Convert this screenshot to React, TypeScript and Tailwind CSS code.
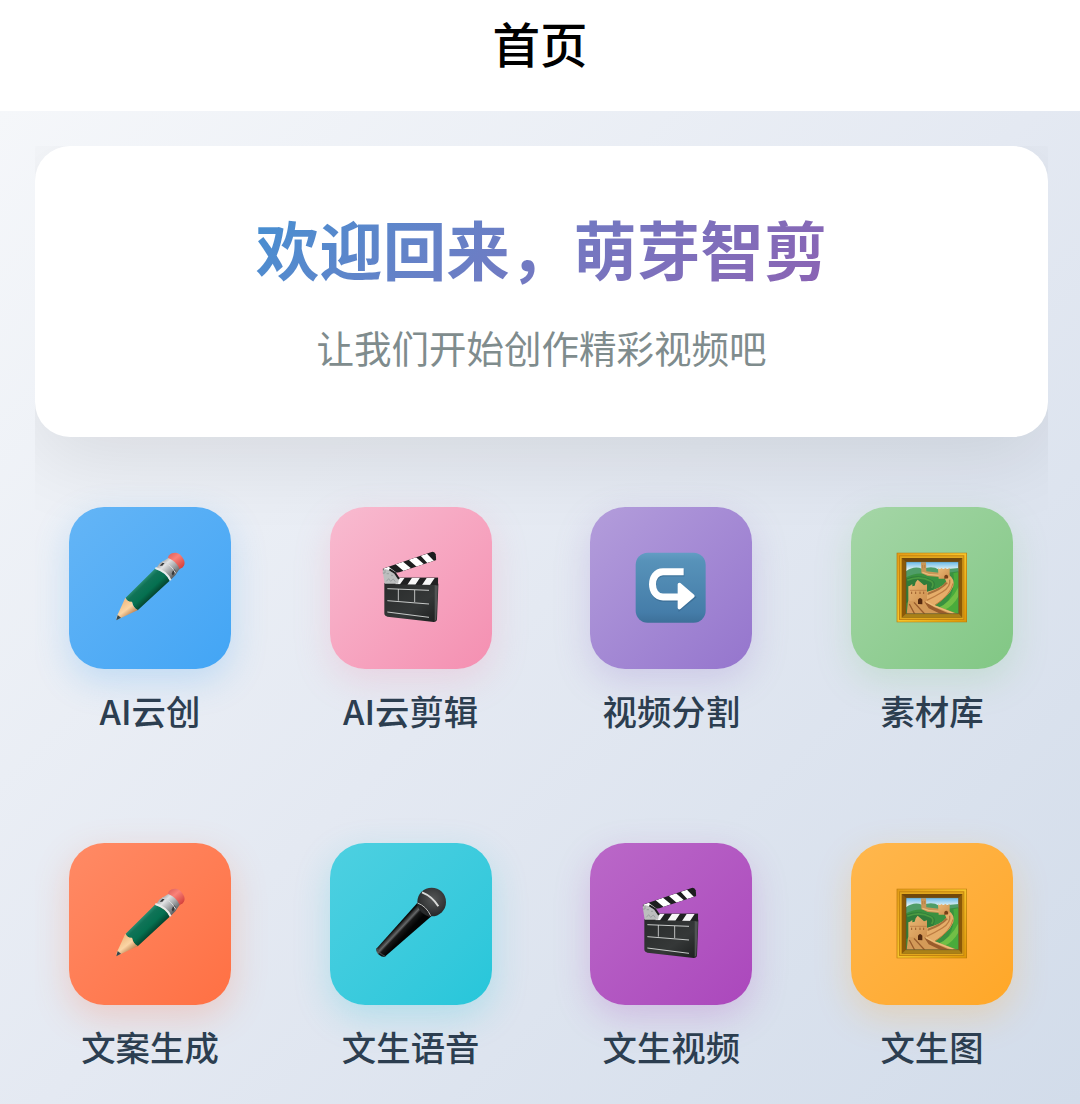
import React from "react";

const PencilIcon = () => (
  <svg viewBox="0 0 300 300" className="mt-1 h-[100px] w-[100px]">
    <defs>
      <linearGradient id="pencilBody" gradientUnits="userSpaceOnUse" x1="122" y1="124" x2="162" y2="166">
        <stop offset="0" stopColor="#2f9277" />
        <stop offset="0.25" stopColor="#107357" />
        <stop offset="0.65" stopColor="#057050" />
        <stop offset="1" stopColor="#05452f" />
      </linearGradient>
      <linearGradient id="pencilMetal" gradientUnits="userSpaceOnUse" x1="180" y1="62" x2="225" y2="110">
        <stop offset="0" stopColor="#8d9091" />
        <stop offset="0.3" stopColor="#e2e3e4" />
        <stop offset="0.6" stopColor="#a9abad" />
        <stop offset="1" stopColor="#57595b" />
      </linearGradient>
      <linearGradient id="pencilEraser" gradientUnits="userSpaceOnUse" x1="210" y1="40" x2="245" y2="82">
        <stop offset="0" stopColor="#e0635d" />
        <stop offset="0.4" stopColor="#fa8279" />
        <stop offset="1" stopColor="#d6443f" />
      </linearGradient>
      <linearGradient id="pencilWood" gradientUnits="userSpaceOnUse" x1="66" y1="190" x2="94" y2="226">
        <stop offset="0" stopColor="#f2bf87" />
        <stop offset="0.5" stopColor="#fbd5a5" />
        <stop offset="1" stopColor="#bc8050" />
      </linearGradient>
    </defs>
    <path d="M206 47Q213 37 228 38Q243 41 252 60Q257 73 248 82L236 89L203 56Z" fill="url(#pencilEraser)" />
    <path d="M169 84L179 70L205 54Q229 64 239 86L226 106L211 121Q198 94 169 84Z" fill="url(#pencilMetal)" />
    <path d="M179 77L190 66L194 69L187 77ZM215 101L221 86L227 92L219 107Z" fill="#37393b" />
    <path d="M187 66Q213 72 227 100" fill="none" stroke="#d9dadb" strokeWidth="3" />
    <path d="M77 173L165 86Q197 95 209 122L113 211Q101 205 96 186Q84 189 77 173Z" fill="url(#pencilBody)" />
    <path d="M166 84Q199 94 212 121" fill="none" stroke="#e8ecea" strokeWidth="6" />
    <path d="M76 173Q82 186 96 185Q99 203 114 210L50 240L50 230Z" fill="url(#pencilWood)" />
    <path d="M53 225L63 233L49 241Z" fill="#34474f" />
  </svg>
);

const ClapperIcon = () => (
  <svg viewBox="5 2 300 300" className="mt-1 h-[100px] w-[100px]">
    <defs>
      <linearGradient id="slate" x1="0" y1="0" x2="1" y2="1">
        <stop offset="0" stopColor="#292b2b" />
        <stop offset="0.6" stopColor="#353838" />
        <stop offset="1" stopColor="#1c1e1e" />
      </linearGradient>
      <clipPath id="clapTop">
        <path d="M70 88L219 37Q226 36 229 45L231 62L120 99L104 101L72 104Z" />
      </clipPath>
      <clipPath id="clapBottom">
        <path d="M76 114L237 114L236 137L76 135Z" />
      </clipPath>
    </defs>
    <g clipPath="url(#clapTop)">
      <path d="M60 30H240V110H60Z" fill="#1d1e1f" />
      <path d="M70 88L88 82L112 100L96 108ZM109 75L131 67L155 87L133 95ZM148 61L170 54L194 75L172 82ZM184 49L203 43L224 65L204 71Z" fill="#fff" />
    </g>
    <path d="M75 131H236Q238 134 237 142L233 240Q232 248 223 248L84 232Q75 230 75 222Z" fill="url(#slate)" />
    <path d="M226 137L235 140L231 241L226 245Z" fill="#515454" />
    <g clipPath="url(#clapBottom)">
      <path d="M76 114H238V138H76Z" fill="#202122" />
      <path d="M116 115L136 115L122 135L108 135ZM158 115L182 115L168 136L144 136ZM202 116L226 116L212 137L188 137Z" fill="#f7f7f7" />
    </g>
    <path d="M70 94Q76 88 86 91L103 101L119 119L116 133L76 133Z" fill="#bcbebe" />
    <path d="M90 90L107 101L119 119" fill="none" stroke="#1d1e1f" strokeWidth="6" />
    <path d="M70 101H77V91M82 103H89M95 108H101M81 126L88 118L94 126L102 119L108 127" fill="none" stroke="#8d9192" strokeWidth="2" />
    <path d="M84 148L209 153M84 184L209 194M84 218L209 234" fill="none" stroke="#dfe1e0" strokeWidth="2.6" />
    <path d="M117 149V184M166 152V188" fill="none" stroke="#dfe1e0" strokeWidth="2.4" />
  </svg>
);

const ArrowIcon = () => (
  <svg viewBox="0 0 300 300" className="mt-1 h-[100px] w-[100px]">
    <defs>
      <linearGradient id="arrowTile" x1="0" y1="0" x2="0" y2="1">
        <stop offset="0" stopColor="#639dc4" />
        <stop offset="0.12" stopColor="#5792b9" />
        <stop offset="0.85" stopColor="#457da9" />
        <stop offset="1" stopColor="#3d7099" />
      </linearGradient>
    </defs>
    <rect x="44" y="38" width="210" height="210" rx="36" fill="url(#arrowTile)" />
    <g transform="translate(2 4)" opacity="0.35">
      <path d="M188 95H126C83 95 83 171 126 171H178" fill="none" stroke="#244f73" strokeWidth="21" />
      <path d="M173 129L221 168L173 207Z" fill="#244f73" stroke="#244f73" strokeWidth="5" />
    </g>
    <path d="M188 95H126C84 95 84 171 126 171H178" fill="none" stroke="#fff" strokeWidth="21" />
    <path d="M175 133L216 168L175 203Z" fill="#fff" stroke="#fff" strokeWidth="10" strokeLinejoin="round" />
  </svg>
);

const PictureIcon = () => (
  <svg viewBox="0 0 300 300" className="mt-1 h-[100px] w-[100px]">
    <defs>
      <linearGradient id="pictureGold" x1="0" y1="0" x2="1" y2="1">
        <stop offset="0" stopColor="#e29b16" />
        <stop offset="0.5" stopColor="#f6c42a" />
        <stop offset="1" stopColor="#dd9707" />
      </linearGradient>
      <linearGradient id="pictureSky" x1="0" y1="0" x2="0" y2="1">
        <stop offset="0" stopColor="#64b7e8" />
        <stop offset="0.15" stopColor="#e2f2f3" />
      </linearGradient>
      <linearGradient id="wallStone" x1="0" y1="0" x2="1" y2="1">
        <stop offset="0" stopColor="#eab774" />
        <stop offset="1" stopColor="#cd8f4e" />
      </linearGradient>
      <clipPath id="pictureView">
        <path d="M72 65H230V221H72Z" />
      </clipPath>
    </defs>
    <path d="M44 38H255V247H44Z" fill="#b7770b" />
    <path d="M46 40H253V245H46Z" fill="url(#pictureGold)" />
    <path d="M51 46H247V240H51Z" fill="#c48411" />
    <path d="M54 49H244V237H54Z" fill="#e2a71d" />
    <path d="M59 54H241V233H59Z" fill="#8b5908" />
    <path d="M59 54H241L230 65H72Z" fill="#70470b" />
    <path d="M59 233L72 221H230L241 233Z" fill="#a98118" />
    <g clipPath="url(#pictureView)">
      <path d="M72 65H230V221H72Z" fill="url(#pictureSky)" />
      <path d="M72 94Q97 76 121 87Q151 76 171 89L230 84V221H72Z" fill="#4f9d68" />
      <path d="M72 112Q110 92 143 106L230 94V221H72Z" fill="#3a9140" />
      <path d="M72 116Q112 100 151 121Q166 130 152 152L72 190Z" fill="#2f7c3a" />
      <path d="M76 121Q111 105 146 123Q158 130 149 144" fill="none" stroke="#4b9a41" strokeWidth="5" />
      <path d="M214 100L230 96V221H164Q226 170 214 100Z" fill="#49ab3b" />
      <path d="M166 205Q207 186 230 140V168Q211 202 184 211Z" fill="#72bf46" />
      <path d="M117 67H132L133 94L171 98V111L137 108L118 99Z" fill="#c99657" />
      <path d="M121 97L139 103L171 106" fill="none" stroke="#e8bd7c" strokeWidth="4" />
      <path d="M122 75V85M128 75V84" fill="none" stroke="#a36e36" strokeWidth="1.5" />
      <path d="M201 105Q219 117 214 139Q201 171 148 202L120 190L133 156Q179 144 193 126L188 114Z" fill="#e5ad69" />
      <path d="M190 126Q183 142 137 158V165Q178 151 198 129Z" fill="#a8713b" />
      <path d="M203 119Q207 140 181 156Q157 171 134 181" fill="none" stroke="#bd7d42" strokeWidth="4" />
      <path d="M213 130Q207 164 157 197" fill="none" stroke="#bf7f3f" strokeWidth="3" />
      <path d="M168 85L174 88L178 84L184 88L190 84L196 88L203 84V110L197 116H170Z" fill="url(#wallStone)" />
      <path d="M187 116V108Q193 100 198 108V115" fill="#764019" />
      <path d="M84 137L91 132V139L98 137L101 127L107 119L114 125L121 131L126 136L135 133V181L115 193L79 194V139Z" fill="url(#wallStone)" />
      <path d="M84 151H134" fill="none" stroke="#b27541" strokeWidth="2" />
      <path d="M89 155V162M101 155V162M114 155V162M125 155V162" fill="none" stroke="#9a5d2d" strokeWidth="3" />
      <path d="M78 184L126 181L157 195L228 222H74Z" fill="#d39a58" />
      <path d="M82 192L98 222M96 187L128 222" fill="none" stroke="#995c2c" strokeWidth="4" />
      <path d="M126 184L157 202L204 222H176L140 205Z" fill="#995c2c" />
      <path d="M132 185L160 199L214 220" fill="none" stroke="#edbd7c" strokeWidth="4" />
      <path d="M108 192V179Q114 169 121 179V193Z" fill="#54290f" />
    </g>
    <path d="M72 65H230V221H72Z" fill="none" stroke="#68521f" strokeWidth="2" />
  </svg>
);

const MicIcon = () => (
  <svg viewBox="3 3 300 300" className="mt-1 h-[100px] w-[100px]">
    <defs>
      <linearGradient id="micHandle" gradientUnits="userSpaceOnUse" x1="104" y1="143" x2="139" y2="176">
        <stop offset="0" stopColor="#242627" />
        <stop offset="0.25" stopColor="#070808" />
        <stop offset="0.52" stopColor="#666869" />
        <stop offset="0.66" stopColor="#171818" />
        <stop offset="1" stopColor="#030404" />
      </linearGradient>
      <radialGradient id="micHead" cx="0.55" cy="0.4" r="0.6">
        <stop offset="0" stopColor="#555757" />
        <stop offset="0.7" stopColor="#353738" />
        <stop offset="1" stopColor="#242627" />
      </radialGradient>
    </defs>
    <path d="M171 85L214 124L77 243Q70 249 59 241Q47 232 49 221Z" fill="url(#micHandle)" />
    <path d="M50 219Q56 235 76 244" fill="none" stroke="#4b4d4e" strokeWidth="3" />
    <circle cx="215" cy="81" r="43" fill="url(#micHead)" />
    <path d="M169 87L177 83Q198 93 212 119L207 127Q190 99 169 87Z" fill="#242526" />
    <path d="M173 84Q199 94 212 122" fill="none" stroke="#bfc1bf" strokeWidth="3" />
    <path d="M186 52Q217 64 235 94" fill="none" stroke="#d9dad8" strokeWidth="6" />
  </svg>
);

const features = [
  {
    label: "AI云创",
    icon: PencilIcon,
    tile: "from-[#64b5f6] to-[#42a5f5] shadow-[0_12px_35px_rgba(66,165,245,0.25)]",
  },
  {
    label: "AI云剪辑",
    icon: ClapperIcon,
    tile: "from-[#f8bbd0] to-[#f48fb1] shadow-[0_12px_35px_rgba(244,143,177,0.25)]",
  },
  {
    label: "视频分割",
    icon: ArrowIcon,
    tile: "from-[#b39ddb] to-[#9575cd] shadow-[0_12px_35px_rgba(149,117,205,0.25)]",
  },
  {
    label: "素材库",
    icon: PictureIcon,
    tile: "from-[#a5d6a7] to-[#81c784] shadow-[0_12px_35px_rgba(129,199,132,0.25)]",
  },
  {
    label: "文案生成",
    icon: PencilIcon,
    tile: "from-[#ff8a65] to-[#ff7043] shadow-[0_12px_35px_rgba(255,112,67,0.25)]",
  },
  {
    label: "文生语音",
    icon: MicIcon,
    tile: "from-[#4dd0e1] to-[#26c6da] shadow-[0_12px_35px_rgba(38,198,218,0.25)]",
  },
  {
    label: "文生视频",
    icon: ClapperIcon,
    tile: "from-[#ba68c8] to-[#ab47bc] shadow-[0_12px_35px_rgba(171,71,188,0.25)]",
  },
  {
    label: "文生图",
    icon: PictureIcon,
    tile: "from-[#ffb74d] to-[#ffa726] shadow-[0_12px_35px_rgba(255,167,38,0.25)]",
  },
];

const FeatureItem = ({ label, icon: Icon, tile }: (typeof features)[number]) => (
  <button className="flex flex-col items-center">
    <div className={`flex h-[162px] w-[162px] items-center justify-center rounded-[35px] bg-linear-135 ${tile}`}>
      <Icon />
    </div>
    <span className="mt-4 text-[34.4px] leading-[50px] font-medium whitespace-nowrap text-[#2c3e50]">
      {label}
    </span>
  </button>
);

const App = () => {
  return (
    <div className="flex h-[1104px] w-[1080px] flex-col overflow-hidden bg-white font-['Noto_Sans_CJK_SC',sans-serif]">
      <header className="flex h-[111px] shrink-0 justify-center pt-2">
        <h1 className="text-[47.5px] leading-[70px] font-medium text-black">首页</h1>
      </header>
      <main className="flex-1 bg-linear-135 from-[#f5f7fa] via-[#e4e9f2] to-[#d2dcea] pt-[35px] pr-8 pl-[35px]">
        <div className="h-full overflow-hidden">
          <section className="flex h-[291px] flex-col items-center rounded-[35px] bg-white shadow-[0_23px_80px_rgba(0,0,0,0.09)]">
            <h2 className="mt-14 bg-linear-135 from-[#4290d2] to-[#8b62b3] bg-clip-text text-[63.5px] leading-[90px] font-bold text-transparent">
              欢迎回来，萌芽智剪
            </h2>
            <p className="mt-[27px] text-[37.5px] leading-[56px] text-[#7f8c8d]">让我们开始创作精彩视频吧</p>
          </section>
          <section className="grid grid-cols-[repeat(4,162px)] justify-between gap-y-[108px] pt-[70px] pr-[35px] pl-[34px]">
            {features.map((item) => (
              <FeatureItem key={item.label} {...item} />
            ))}
          </section>
        </div>
      </main>
    </div>
  );
};

export default App;
